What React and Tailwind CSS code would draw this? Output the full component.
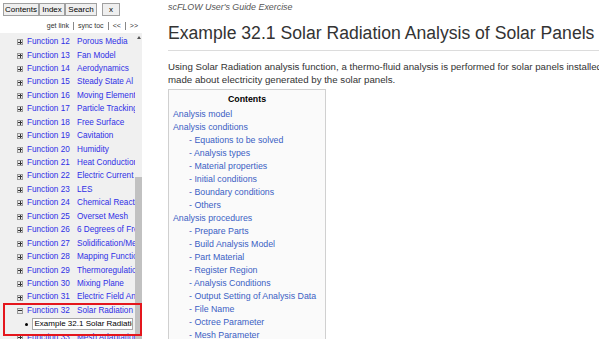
import React from "react";

const functions = [
  ["Function 12", "Porous Media"],
  ["Function 13", "Fan Model"],
  ["Function 14", "Aerodynamics"],
  ["Function 15", "Steady State Al"],
  ["Function 16", "Moving Element"],
  ["Function 17", "Particle Tracking"],
  ["Function 18", "Free Surface"],
  ["Function 19", "Cavitation"],
  ["Function 20", "Humidity"],
  ["Function 21", "Heat Conduction"],
  ["Function 22", "Electric Current"],
  ["Function 23", "LES"],
  ["Function 24", "Chemical Reaction"],
  ["Function 25", "Overset Mesh"],
  ["Function 26", "6 Degrees of Freedom"],
  ["Function 27", "Solidification/Melting"],
  ["Function 28", "Mapping Function"],
  ["Function 29", "Thermoregulation"],
  ["Function 30", "Mixing Plane"],
  ["Function 31", "Electric Field Analysis"],
  ["Function 32", "Solar Radiation"],
];

const contents = [
  [0, "Analysis model"],
  [0, "Analysis conditions"],
  [1, "Equations to be solved"],
  [1, "Analysis types"],
  [1, "Material properties"],
  [1, "Initial conditions"],
  [1, "Boundary conditions"],
  [1, "Others"],
  [0, "Analysis procedures"],
  [1, "Prepare Parts"],
  [1, "Build Analysis Model"],
  [1, "Part Material"],
  [1, "Register Region"],
  [1, "Analysis Conditions"],
  [1, "Output Setting of Analysis Data"],
  [1, "File Name"],
  [1, "Octree Parameter"],
  [1, "Mesh Parameter"],
];

function Toggle({ open }) {
  return (
    <span className="w-[6px] h-[6px] border border-[#9a9a9a] bg-[#e8e8e8] flex items-center justify-center shrink-0 relative">
      <span className="absolute w-[4px] h-px bg-[#333]" />
      {!open && <span className="absolute w-px h-[4px] bg-[#333]" />}
    </span>
  );
}

function TreeRow({ num, name, open }) {
  return (
    <div className="h-[13.45px] flex items-center pl-[17px] whitespace-nowrap">
      <Toggle open={open} />
      <span className="ml-[4px] w-[50px] shrink-0 text-[#2f2fe6]">{num}</span>
      <span className="text-[#2f2fe6]">{name}</span>
    </div>
  );
}

export default function App() {
  return (
    <div
      className="w-[599px] h-[339px] overflow-hidden flex bg-white relative"
      style={{ fontFamily: '"Liberation Sans", Arial, sans-serif' }}
    >
      {/* left nav */}
      <div className="w-[142px] shrink-0 flex flex-col">
        <div className="h-[33px] shrink-0 bg-white">
          <div className="flex pt-[3px] pl-[3px] text-[8px] text-black">
            <div className="h-[13px] w-[36px] flex items-center justify-center border border-[#a0a0a0] bg-[#efefef]">Contents</div>
            <div className="h-[13px] w-[26px] flex items-center justify-center border border-[#a0a0a0] bg-[#efefef]">Index</div>
            <div className="h-[13px] w-[32px] flex items-center justify-center border border-[#a0a0a0] bg-[#efefef]">Search</div>
            <div className="h-[13px] w-[18px] ml-[5px] flex items-center justify-center border border-[#a0a0a0] bg-[#efefef]">x</div>
          </div>
          <div className="flex justify-end items-center gap-[4px] pr-[4px] mt-[5px] text-[7px] text-[#333]">
            <span>get link</span>
            <span className="w-px h-[8px] bg-[#888]" />
            <span>sync toc</span>
            <span className="w-px h-[8px] bg-[#888]" />
            <span>&lt;&lt;</span>
            <span className="w-px h-[8px] bg-[#888]" />
            <span>&gt;&gt;</span>
          </div>
        </div>
        <div className="flex-1 flex bg-[#f0f0f0] overflow-hidden">
          <div className="flex-1 pt-[2.5px] text-[8.2px] overflow-hidden">
            {functions.map(([n, t], i) => (
              <TreeRow key={n} num={n} name={t} open={i === functions.length - 1} />
            ))}
            <div className="h-[13.45px] flex items-center pl-[25px] whitespace-nowrap">
              <span className="w-[2.5px] h-[2.5px] rounded-full bg-black shrink-0" />
              <span className="ml-[4px] w-[101px] h-[12px] border border-[#a8a8a8] bg-white pl-[2px] flex items-center overflow-hidden text-[8px] text-black">
                Example 32.1 Solar Radiation
              </span>
            </div>
            <TreeRow num="Function 33" name="Mesh Adaptation" />
          </div>
          <div className="w-[7px] shrink-0 flex flex-col items-center">
            <span className="mt-[3px] w-0 h-0 border-l-[2.5px] border-r-[2.5px] border-b-[3px] border-l-transparent border-r-transparent border-b-[#555]" />
            <div className="mt-[138px] w-[7px] flex-1 bg-[#c1c1c1]" />
          </div>
        </div>
      </div>

      {/* main content */}
      <div className="flex-1 pl-[26px] text-[#333] whitespace-nowrap">
        <div className="pt-[1px] text-[8.9px] italic text-[#555]">scFLOW User's Guide Exercise</div>
        <h1 className="mt-[8px] text-[17.6px] leading-[22px] text-[#333]">
          Example 32.1 Solar Radiation Analysis of Solar Panels
        </h1>
        <div className="mt-[6px] h-px bg-[#dcdcdc]" />
        <p className="mt-[9px] text-[9.7px] leading-[13px]">
          Using Solar Radiation analysis function, a thermo-fluid analysis is performed for solar panels installed on a roof, and an evaluation is
          <br />
          made about electricity generated by the solar panels.
        </p>
        <div className="mt-[3px] w-[158px] border border-[#d0d0d0] bg-[#fafafa] pt-[3px] pl-[4px] pb-[4px]">
          <div className="text-center text-[8.8px] font-bold text-black leading-[13px] pr-[4px]">Contents</div>
          <div className="mt-[2px] text-[8.8px] leading-[13px] text-[#3b5fc4]">
            {contents.map(([lvl, t], i) => (
              <div key={i} className={lvl ? "pl-[16px]" : ""}>
                {lvl ? "- " : ""}
                {t}
              </div>
            ))}
          </div>
        </div>
      </div>

      {/* highlight annotation */}
      <div className="absolute left-[3px] top-[303px] w-[139px] h-[33px] border-2 border-[#e4161d] pointer-events-none" />
    </div>
  );
}
